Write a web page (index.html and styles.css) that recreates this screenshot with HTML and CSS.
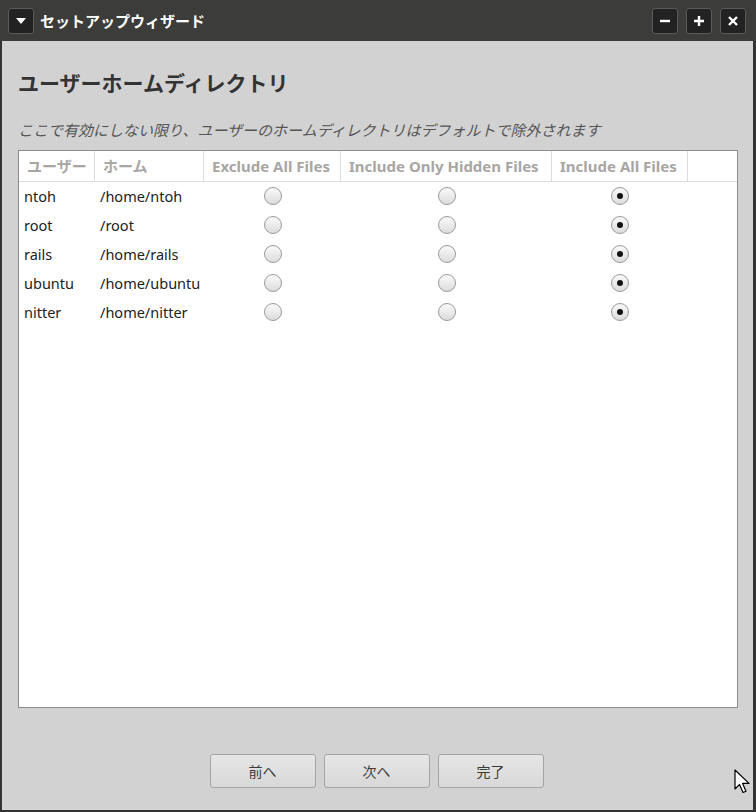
FILE: index.html
```html
<!DOCTYPE html>
<html lang="ja">
<head>
    <meta charset="UTF-8">
    <title>セットアップウィザード</title>
    <link rel="stylesheet" href="styles.css">
</head>
<body>
    <div class="window">
        <div class="titlebar">
            <button class="tb-btn menu-btn">
                <svg width="12" height="8" viewBox="0 0 12 8"><path d="M1 1h10L6 7z" fill="#fff"/></svg>
            </button>
            <span class="title">セットアップウィザード</span>
            <div class="tb-right">
                <button class="tb-btn"><svg width="12" height="12" viewBox="0 0 12 12"><path d="M1 6h10" stroke="#fff" stroke-width="2.4"/></svg></button>
                <button class="tb-btn"><svg width="12" height="12" viewBox="0 0 12 12"><path d="M1 6h10M6 1v10" stroke="#fff" stroke-width="2.4"/></svg></button>
                <button class="tb-btn"><svg width="12" height="12" viewBox="0 0 12 12"><path d="M2 2l8 8M10 2l-8 8" stroke="#fff" stroke-width="2.4"/></svg></button>
            </div>
        </div>

        <div class="content">
            <h1>ユーザーホームディレクトリ</h1>
            <p class="hint">ここで有効にしない限り、ユーザーのホームディレクトリはデフォルトで除外されます</p>

            <div class="table">
                <div class="thead">
                    <div class="th">ユーザー</div>
                    <div class="th">ホーム</div>
                    <div class="th">Exclude All Files</div>
                    <div class="th">Include Only Hidden Files</div>
                    <div class="th">Include All Files</div>
                    <div class="th last"></div>
                </div>
                <div class="tbody" id="rows"></div>
            </div>
        </div>

        <div class="actions">
            <button class="btn">前へ</button>
            <button class="btn">次へ</button>
            <button class="btn">完了</button>
        </div>

        <svg class="cursor" width="16" height="26" viewBox="0 0 16 26">
            <path d="M1 1v19l4.5-4.5 3.5 8 3-1.3-3.4-7.8H15z" fill="#fff" stroke="#000" stroke-width="1.2" stroke-linejoin="round"/>
        </svg>
    </div>

<script>
const users = [
  ["ntoh", "/home/ntoh"],
  ["root", "/root"],
  ["rails", "/home/rails"],
  ["ubuntu", "/home/ubuntu"],
  ["nitter", "/home/nitter"],
];

const rows = document.getElementById("rows");
users.forEach(([name, home]) => {
  const row = document.createElement("div");
  row.className = "tr";
  row.innerHTML =
    `<div class="td">${name}</div>` +
    `<div class="td">${home}</div>` +
    `<div class="td center"><span class="radio"></span></div>` +
    `<div class="td center"><span class="radio"></span></div>` +
    `<div class="td center"><span class="radio on"></span></div>` +
    `<div class="td"></div>`;
  rows.appendChild(row);
});
</script>
</body>
</html>
```

FILE: styles.css
```css
body {
  margin: 0;
  padding: 0;
  background-color: #2e2e2e;
  font-family: "Noto Sans", "Noto Sans CJK JP", sans-serif;
}

.window {
  position: relative;
  width: 756px;
  height: 812px;
  box-sizing: border-box;
  display: flex;
  flex-direction: column;
  background-color: #d2d2d2;
  border-left: 2px solid #333;
  border-right: 3px solid #333;
  border-bottom: 2px solid #333;
}

.titlebar {
  height: 41px;
  flex-shrink: 0;
  display: flex;
  align-items: center;
  background-color: #3c3c3a;
  margin-left: -2px;
  margin-right: -3px;
  padding-left: 8px;
  padding-right: 10px;
}

.tb-btn {
  width: 26px;
  height: 26px;
  padding: 0;
  display: flex;
  align-items: center;
  justify-content: center;
  background-color: #222;
  border: 1px solid #5a5a5a;
  border-radius: 3px;
}

.title {
  margin-left: 6px;
  color: #fff;
  font-size: 15px;
  font-weight: bold;
}

.tb-right {
  margin-left: auto;
  display: flex;
  gap: 8px;
}

.content {
  display: flex;
  flex-direction: column;
  padding: 0 15px 0 16px;
}

h1 {
  margin: 27px 0 0 0;
  font-size: 21px;
  line-height: 30px;
  font-weight: bold;
  color: #333;
}

.hint {
  margin: 22px 0 10px 0;
  font-size: 15px;
  line-height: 20px;
  font-style: italic;
  color: #555;
}

.table {
  height: 558px;
  box-sizing: border-box;
  background-color: #fff;
  border: 1px solid #8c8c8c;
}

.thead,
.tr {
  display: grid;
  grid-template-columns: 76px 109px 137px 211px 136px 1fr;
}

.th {
  height: 30px;
  line-height: 30px;
  padding: 0 7px 0 8px;
  font-size: 15px;
  font-weight: bold;
  color: #a8a6a4;
  border-right: 1px solid #dcdcdc;
  border-bottom: 1px solid #dcdcdc;
  white-space: nowrap;
  overflow: hidden;
}

.th.last {
  border-right: none;
}

.td {
  height: 29px;
  box-sizing: border-box;
  padding: 0 0 1px 5px;
  display: flex;
  align-items: center;
  font-size: 14.5px;
  color: #222;
}

.td.center {
  justify-content: center;
  padding-left: 0;
}

.radio {
  width: 18px;
  height: 18px;
  box-sizing: border-box;
  border-radius: 50%;
  border: 1px solid #9a9a9a;
  background: linear-gradient(#fafafa, #dcdcdc);
  display: flex;
  align-items: center;
  justify-content: center;
}

.radio.on::after {
  content: "";
  width: 6px;
  height: 6px;
  border-radius: 50%;
  background-color: #111;
}

.actions {
  flex: 1;
  display: flex;
  justify-content: center;
  align-items: flex-start;
  gap: 8px;
  padding-top: 46px;
  padding-right: 2px;
}

.btn {
  width: 106px;
  height: 34px;
  font-family: "Noto Sans", "Noto Sans CJK JP", sans-serif;
  font-size: 14px;
  color: #3a3a3a;
  background: linear-gradient(#e6e6e6, #d8d8d8);
  border: 1px solid #a4a4a4;
  border-radius: 3px;
}

.cursor {
  position: absolute;
  left: 732px;
  top: 769px;
}
```
